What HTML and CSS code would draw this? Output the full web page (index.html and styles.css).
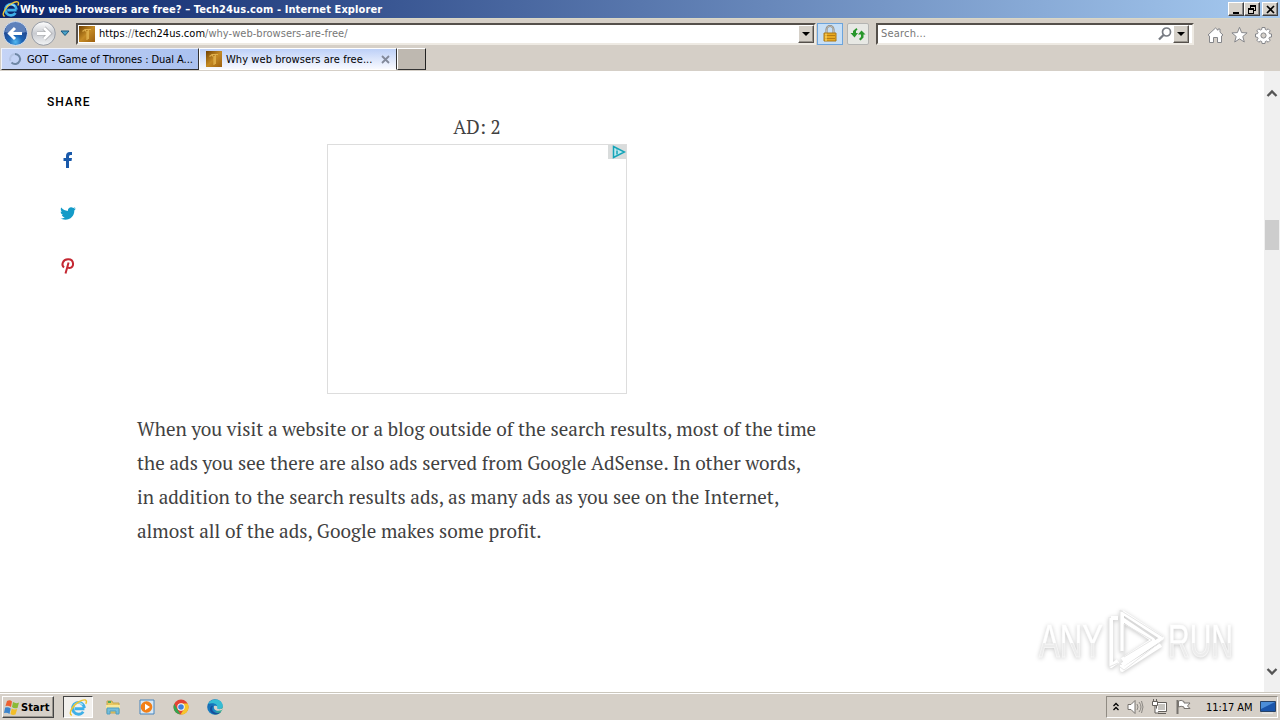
FILE: index.html
```html
<!DOCTYPE html>
<html lang="en">
<head>
<meta charset="utf-8">
<title>Why web browsers are free?</title>
<link rel="stylesheet" href="styles.css">
</head>
<body>
<svg class="defs" width="0" height="0" aria-hidden="true">
  <defs>
    <linearGradient id="gold" x2="1" y2="1"><stop stop-color="#704000"/><stop offset=".5" stop-color="#c48a25"/><stop offset="1" stop-color="#9d6010"/></linearGradient>
    <radialGradient id="orb" cy=".85"><stop stop-color="#55baf2"/><stop offset=".55" stop-color="#1c64b5"/><stop offset="1" stop-color="#224e98"/></radialGradient>
    <linearGradient id="glass" x2="0" y2="1"><stop stop-color="#fff"/><stop offset=".5" stop-color="#c9cbd0"/><stop offset="1" stop-color="#f2f4f6"/></linearGradient>
    <linearGradient id="edge" x2="1" y2="1"><stop stop-color="#185ba8"/><stop offset=".6" stop-color="#1687c8"/><stop offset="1" stop-color="#55ce65"/></linearGradient>
    <linearGradient id="markfill" x2="0" y2="1"><stop offset=".55" stop-color="#fff"/><stop offset=".55" stop-color="#ececec"/></linearGradient>
    <symbol id="ie" viewBox="0 0 18 18">
      <path d="M14.6 10.2H5.2M14.5 9.6A5.600 5.600 0 1 0 13.500 13" fill="none" stroke="#3fb0e8" stroke-width="2.700"/>
      <path d="M4.500 7.200A5.300 5.300 0 0 1 13 6.400" fill="none" stroke="#a5e2f8" stroke-width="1.200"/>
      <path d="M2.700 16.300C-1.200 15.500 3 7.100 9.600 3.500C14.500.7 18 1.300 15.900 5.500" fill="none" stroke="#edc431" stroke-width="1.400"/>
    </symbol>
    <symbol id="site" viewBox="0 0 16 16">
      <path d="M0 0h16v16H0z" fill="url(#gold)"/>
      <path d="M3.500 5.500 6 3.500h6M6.500 3.500v2M8 5v9M9.300 4v9" fill="none" stroke="#e0b04c" stroke-width="1.200"/>
    </symbol>
  </defs>
</svg>
<div class="screen">
  <header class="titlebar">
    <svg class="title-icon" width="18" height="18"><use href="#ie"/></svg>
    <span class="title">Why web browsers are free? – Tech24us.com - Internet Explorer</span>
    <div class="winbtns">
      <span class="winbtn"><svg width="13" height="11"><path d="M3 8h6v2H3z"/></svg></span>
      <span class="winbtn"><svg width="13" height="11"><path d="M4 1h6v6H8V6h1V3H5v1H4zM2 4h6v6H2zm1 2v3h4V6z" fill-rule="evenodd"/></svg></span>
      <span class="winbtn gap"><svg width="13" height="11"><path d="m3 2 7 7M10 2 3 9" stroke="#000" stroke-width="1.700"/></svg></span>
    </div>
  </header>
  <nav class="navbar">
    <svg class="back" width="28" height="28" viewBox="0 0 28 28"><circle cx="13.500" cy="13.500" r="12" fill="url(#orb)" stroke="#dce5f1"/><path d="M3 12A10.500 10.500 0 0 1 24 12Q14 15 3 12" fill="#8fabd8" opacity=".55"/><path d="M20 13.500H8.500M13 8l-5.500 5.500L13 19" fill="none" stroke="#fff" stroke-width="3"/></svg>
    <svg class="forward" width="28" height="28" viewBox="0 0 28 28"><circle cx="13.500" cy="13.500" r="11.800" fill="url(#glass)" stroke="#989da6"/><path d="M7 13.500h12M14 8l5.500 5.500L14 19" fill="none" stroke="#a8a9ac" stroke-width="4.200"/><path d="M7 13.500h12M14 8l5.500 5.500L14 19" fill="none" stroke="#fff" stroke-width="2.800"/></svg>
    <svg class="recent" width="10" height="7"><path d="M1 1h8L5 5.500z" fill="#4aa3c9" stroke="#17577e"/></svg>
    <div class="field address">
      <svg width="16" height="16"><use href="#site"/></svg>
      <span class="url">https<span class="grey">://</span>tech24us.com<span class="grey">/why-web-browsers-are-free/</span></span>
      <span class="drop"><svg width="8" height="4"><path d="M0 0h8L4 4z"/></svg></span>
    </div>
    <span class="tool lock"><svg width="16" height="18" viewBox="0 0 16 18"><path d="M4.500 8V4.500a3.500 3.500 0 0 1 7 0V8" fill="none" stroke="#85817a" stroke-width="2"/><path d="M4.500 8V4.500a3.500 3.500 0 0 1 7 0V8" fill="none" stroke="#d7d3c6" stroke-width=".7"/><path d="M2 8h12v8H2z" fill="#e8a920" stroke="#a97614"/><path d="M3 10.500h10M3 13.500h10" stroke="#b77d13"/><path d="M4 8.500V16" stroke="#ffe178"/></svg></span>
    <span class="tool refresh"><svg width="16" height="16" viewBox="0 0 16 16"><path d="M.5 7H3V5l3.500-3 1 1.500L6 5v2h2l-3.500 4.500zM8 8.500 11.500 4.500 15.500 8.500h-2v3L10.500 14.500 9 13l2-2V8.500z" fill="#27962b"/></svg></span>
    <div class="field search">
      <span class="search-label">Search...</span>
      <svg class="magnifier" width="16" height="16" viewBox="0 0 16 16"><circle cx="9.500" cy="6" r="4" fill="#fff" stroke="#777b82" stroke-width="1.700"/><path d="M6.500 9 2 13.500" stroke="#777b82" stroke-width="2.300"/></svg>
      <span class="drop"><svg width="8" height="4"><path d="M0 0h8L4 4z"/></svg></span>
    </div>
    <div class="commands">
      <svg width="17" height="18" viewBox="0 0 17 18"><path d="m1 9 7.500-7L11 4.300V3h2v3.200L16 9l-1.500 1V16.500h-4v-5h-4v5h-4V10z" fill="#fff" stroke="#85868a"/></svg>
      <svg width="17" height="18" viewBox="0 0 17 18"><path d="m8.500 1.300 2.100 5.300 5.500.3-4.300 3.600 1.500 5.500-4.800-3.100L3.700 16l1.500-5.500L.9 6.900l5.500-.3z" fill="#fff" stroke="#85868a"/></svg>
      <svg width="17" height="18" viewBox="0 0 17 18"><path d="m7 1.500h3l.3 2 1.200.5 1.700-1.200 2 2L14 6.500l.5 1.200 2 .3v3l-2 .3-.5 1.200 1.200 1.700-2 2-1.700-1.200-1.200.5-.3 2H7l-.3-2-1.200-.5-1.700 1.200-2-2L3 12.500l-.5-1.200-2-.3V8l2-.3L3 6.500 1.800 4.800l2-2L5.500 4l1.200-.5z" fill="#fff" stroke="#85868a"/><circle cx="8.500" cy="9.500" r="2.600" fill="#d5d0c9" stroke="#85868a"/></svg>
    </div>
  </nav>
  <div class="tabs">
    <div class="tab inactive">
      <svg width="14" height="14" viewBox="0 0 14 14"><path d="M7 2a5 5 0 1 1-3.500 8.500" fill="none" stroke="#6f87a5" stroke-width="2"/><path d="M7 2a5 5 0 0 0-4.500 7" fill="none" stroke="#b4c4e3" stroke-width="2"/></svg>
      <span class="tabtext">GOT - Game of Thrones : Dual A...</span>
    </div>
    <div class="tab active">
      <svg width="16" height="16"><use href="#site"/></svg>
      <span class="tabtext">Why web browsers are free...</span>
      <svg class="close" width="9" height="9"><path d="m1 1 7 7M8 1 1 8" stroke="#82899a" stroke-width="1.800"/></svg>
    </div>
    <div class="newtab"></div>
  </div>
  <main class="page">
    <aside class="share">
      <span class="share-label">SHARE</span>
      <svg class="facebook" width="16" height="18" viewBox="0 0 16 18"><path d="M6 17V10H3.500V7H6V5Q6 1 10 1h2v3h-1.500Q9 4 9 5.500V7h3l-.5 3H9v7z" fill="#1959aa"/></svg>
      <svg class="twitter" width="16" height="14" viewBox="0 0 16 14"><path d="M16 1.600l-1.700 1.800C14.500 10 8.500 15 0 11.600c2 .2 3.600-.4 4.800-1.300-1.600-.1-2.600-1-3-2.200h1.400C1.500 7.500.6 6.200.7 4.600l1.500.4C.7 3.800.4 2 1.200.6c1.900 2.100 4 3.200 6.700 3.400C7.400 1 10.900-1 13.300 1l2-.7-1.200 1.600z" fill="#149bc8"/></svg>
      <svg class="pinterest" width="16" height="18" viewBox="0 0 16 18"><path d="M4 10.500C1 8 2.500 2.500 8 2.300c6.500-.2 6.500 8.700 1.500 8.700-1.800 0-2.500-1.200-2.500-1.200M8.600 5.500 5.500 16.500" fill="none" stroke="#c42732" stroke-width="2"/></svg>
    </aside>
    <article class="article">
      <div class="adlabel">AD: 2</div>
      <div class="ad"><span class="adchoice"><svg width="18" height="14"><path d="M5.500 1.500v11L16.500 7z" fill="#bde9ef" stroke="#16a4b8" stroke-width="1.500"/><path d="M9 5.500v4M9 3.500v1" stroke="#16a4b8" stroke-width="1.500"/></svg></span></div>
      <p class="copy">
        <span class="line">When you visit a website or a blog outside of the search results, most of the time</span>
        <span class="line">the ads you see there are also ads served from Google AdSense. In other words,</span>
        <span class="line">in addition to the search results ads, as many ads as you see on the Internet,</span>
        <span class="line">almost all of the ads, Google makes some profit.</span>
      </p>
    </article>
    <div class="scrollbar">
      <svg class="up" width="12" height="9"><path d="m1.500 7 4.500-4.500L10.500 7" fill="none" stroke="#555" stroke-width="2.300"/></svg>
      <span class="thumb"></span>
      <svg class="down" width="12" height="9"><path d="m1.500 2 4.500 4.500L10.500 2" fill="none" stroke="#555" stroke-width="2.300"/></svg>
    </div>
    <svg class="watermark" width="224" height="72" viewBox="0 0 224 72">
      <text class="mark" x="4" y="50" textLength="64" lengthAdjust="spacingAndGlyphs">ANY</text>
      <g transform="translate(72 2)"><path d="M15 3v39M15 3 55 29 15 56M15 10l31 21-31 20M4 9v48l7-5M11 9H4M15 56v5l39-25" fill="none" stroke="#fff" stroke-width="4" stroke-linejoin="round"/><path d="M13 1v43M13 1l43 27M56 31 17 61l-4-3M2 8v50l9-4M17 15v33l28-17z" fill="none" stroke="#e6e6e6"/></g>
      <text class="mark" x="133" y="50" textLength="65" lengthAdjust="spacingAndGlyphs">RUN</text>
    </svg>
  </main>
  <footer class="taskbar">
    <div class="start"><svg width="17" height="17" viewBox="0 0 17 17"><path d="M3 2q3-1.500 5 .5L7 8Q4 6 1.500 7z" fill="#ed6030"/><path d="M9 3q3 2 6 .5L13.500 9Q10 10 8 8z" fill="#8aba35"/><path d="M1.200 8.500q3-1 5.500 1L5.500 15Q3 13 0 14z" fill="#3c84cc"/><path d="M7.700 9.500q2.500 1.500 5.500.5L11.500 15.500q-3 1-5-.5z" fill="#f3be28"/></svg><b>Start</b></div>
    <div class="task ie-task"><svg width="19" height="19"><use href="#ie"/></svg></div>
    <div class="quick">
      <svg width="18" height="18" viewBox="0 0 18 18"><path d="M3 3h5l1 2h6v10H3z" fill="#e9c860" stroke="#c4a651"/><path d="M2 7h14v4H2z" fill="#f8e89b"/><path d="M3 10h12v6h-3v-3H6v3H3z" fill="#75bddb" stroke="#4e9fc3"/><path d="M4 4h3" stroke="#55a856" stroke-width="2"/></svg>
      <svg width="18" height="18" viewBox="0 0 18 18"><path d="M2 2h14v14H2z" fill="#d8e8f5" stroke="#4684bd"/><circle cx="8.500" cy="9" r="5.800" fill="#f27f18"/><path d="m7 5.800 5 3.200-5 3.200z" fill="#fff"/></svg>
      <svg width="18" height="18" viewBox="0 0 18 18"><circle cx="9" cy="9" r="7.500" fill="#e34334"/><path d="M2.300 5.700 6 12.500 8.500 16.500A7.500 7.500 0 0 1 2.300 5.700" fill="#31a650"/><path d="M9 5.500h6.700A7.500 7.500 0 0 1 8.500 16.500L12 11z" fill="#f6c62c"/><circle cx="9" cy="9" r="3.700" fill="#fff"/><circle cx="9" cy="9" r="2.800" fill="#4081dc"/></svg>
      <svg width="18" height="18" viewBox="0 0 18 18"><circle cx="9" cy="9" r="7.800" fill="url(#edge)"/><path d="M2 6C5 0 15 0 16.700 7c.5 4-5 5-6 3 2-3-2-6-8.700-4" fill="#35bcd4"/><path d="M7 8c-3 4 2 9 8 6-3 4-10 3-11-2-.5-3 2-5 3-4" fill="#174f9e"/><path d="M8 8c-1 4 3 6 8 4l1-2c-3 2-6 1-6 0 1-1 0-3-3-2" fill="#d6d2cb"/></svg>
    </div>
    <div class="tray">
      <svg class="chev" width="8" height="10"><path d="m1.500 4 2.500-2.500L6.500 4M1.500 8 4 5.500 6.500 8" fill="none" stroke="#000" stroke-width="1.300"/></svg>
      <svg width="17" height="16" viewBox="0 0 17 16"><path d="M1 5.500h3l4-4v13l-4-4H1z" fill="#fff" stroke="#77736e"/><path d="M10 5q2 3 0 6M12 3q4 5 0 10M14.500 2q3 6 0 12" fill="none" stroke="#8a8782"/></svg>
      <svg width="17" height="16" viewBox="0 0 17 16"><path d="M5.500 3.500h10v9h-10z" fill="#fff" stroke="#625f5b"/><path d="M7 5h7v6H7z" fill="#c6c4bf"/><path d="M7 14.500h8" stroke="#625f5b"/><path d="M1.500 2.500h5v4h-5zM2.500 0v2M5.500 0v2M4 7v7h4" fill="#fff" stroke="#625f5b"/></svg>
      <svg width="17" height="16" viewBox="0 0 17 16"><path d="M2.500 1v14" stroke="#77736e" stroke-width="2"/><path d="M3.500 2Q6 .5 9 2.500V4h6l-2.500 3L15 9.500H9V8Q6 6.500 3.500 8z" fill="#fff" stroke="#77736e"/></svg>
      <span class="clock">11:17 AM</span>
      <svg class="desktop" width="16" height="13" viewBox="0 0 16 13"><path d="M.5.5h15v10H.5z" fill="#1a55aa" stroke="#284366"/><path d="M1 1h14L1 8z" fill="#4c8ed8"/><path d="M2 12h11" stroke="#eceff3"/></svg>
    </div>
  </footer>
</div>
</body>
</html>
```
FILE: styles.css
```css
* { box-sizing: border-box; }
body { margin: 0; overflow: hidden; background: #fff; }
svg { display: block; flex: none; }
.defs { position: absolute; }
.screen { width: 1280px; height: 720px; display: grid; grid-template-rows: 18px 30px 23px 621px 28px; font: 11px "DejaVu Sans Condensed", sans-serif; color: #000; white-space: nowrap; }
.titlebar { display: flex; align-items: center; padding: 0 2px; background: linear-gradient(90deg, #0a246a, #a6caf0); color: #fff; }
.title { font-weight: bold; letter-spacing: .1px; }
.winbtns { display: flex; margin-left: auto; }
.winbtn { width: 16px; height: 14px; padding: 1px; background: #d6d2cb; border: 1px solid; border-color: #fff #404040 #404040 #fff; box-shadow: inset -1px -1px #888; }
.winbtn.gap { margin-left: 2px; }
.navbar { display: flex; align-items: center; padding-left: 2px; background: #d5cfc7; border-top: 1px solid #d9d7c5; }
.recent { margin-left: 2px; }
.field { display: flex; align-items: center; height: 22px; background: #fff; border: 2px solid; border-color: #55504b #eeeae3 #eeeae3 #55504b; }
.address { width: 740px; margin-left: 6px; padding-left: 1px; }
.url { margin-left: 4px; letter-spacing: .03px; }
.grey { color: #777; }
.drop { display: flex; align-items: center; justify-content: center; width: 16px; height: 18px; margin-left: auto; background: #d5d0c8; border: 1px solid; border-color: #fff #55504b #55504b #fff; box-shadow: inset -1px -1px #99958e; }
.tool { display: flex; align-items: center; justify-content: center; height: 22px; }
.lock { width: 26px; margin-left: 1px; background: #c7dff6; border: 1px solid #6ca4dc; }
.refresh { width: 22px; margin-left: 4px; background: #e7e8e4; border: 1px solid #b4b4b2; border-radius: 2px; }
.search { width: 318px; margin-left: 7px; padding: 0 3px; }
.search-label { color: #777; letter-spacing: .2px; }
.magnifier { margin-left: auto; }
.search .drop { margin-left: 0; }
.commands { display: flex; gap: 7px; margin: 2px 0 0 13px; }
.tabs { display: flex; align-items: stretch; background: #d5cfc7; padding-bottom: 1px; }
.tab { display: flex; align-items: center; height: 22px; }
.inactive { width: 198px; margin-left: 1px; padding-left: 6px; background: linear-gradient(90deg, #c5d4f6, #aac1ef); border: 1px solid; border-color: #edf1fb #333 #333 #f1f4fa; }
.inactive .tabtext { margin-left: 5px; letter-spacing: -.06px; }
.active { width: 198px; padding-left: 6px; background: linear-gradient(#bdd0f7, #f9faff); border: 1px solid; border-color: #fff #333 #fff #fff; }
.active .tabtext { margin-left: 4px; letter-spacing: .07px; }
.close { margin-left: auto; margin-right: 6px; }
.newtab { width: 29px; height: 22px; background: #beb8b0; border: 1px solid; border-color: #fff #222 #333 #fff; }
.page { position: relative; display: flex; background: #fff; }
.share { width: 137px; padding: 24px 0 0 47px; }
.share-label { display: block; height: 14px; font: 500 12px/14px Roboto, sans-serif; letter-spacing: 1.1px; }
.facebook { margin: 42px 0 0 13px; }
.twitter { margin: 38px 0 0 13px; }
.pinterest { margin: 36px 0 0 13px; }
.article { width: 680px; padding-top: 39px; font: 19px/34px "PT Serif", "Liberation Serif", serif; color: #414141; }
.adlabel { height: 34px; text-align: center; }
.ad { display: flex; justify-content: flex-end; width: 300px; height: 250px; margin: 0 auto; border: 1px solid #ddd; }
.adchoice { width: 18px; height: 14px; background: #d9dcdc; }
.copy { margin: 18px 0 0; }
.line { display: block; width: max-content; letter-spacing: .02px; }
.scrollbar { display: flex; flex-direction: column; width: 16px; margin-left: auto; padding: 18px 1px 16px; background: #f0f0f0; }
.up, .down { align-self: center; }
.thumb { width: 14px; height: 30px; margin-top: 122px; background: #cdcdcd; }
.down { margin-top: auto; }
.watermark { position: absolute; left: 1035px; top: 536px; overflow: visible; filter: drop-shadow(0 1px 2px #c4c4c4); }
.mark { font: 47px "Liberation Sans", sans-serif; fill: url(#markfill); stroke: #fff; stroke-opacity: .6; }
.taskbar { display: flex; align-items: center; padding: 1px 2px 0; border-top: 1px solid #cbc7bd; box-shadow: inset 0 1px #fff; background: #d6d0c8; }
.start { display: flex; align-items: center; width: 52px; height: 22px; padding-left: 1px; border: 1px solid; border-color: #fff #444 #444 #fff; box-shadow: inset -1px -1px #99958e; }
.start b { letter-spacing: .1px; }
.task { display: flex; align-items: center; justify-content: center; width: 30px; height: 22px; margin-left: 9px; background: #f2f0ed; border: 1px solid; border-color: #444 #fff #fff #444; }
.quick { display: flex; gap: 16px; margin-left: 11px; }
.tray { display: flex; align-items: center; width: 172px; height: 22px; margin-left: auto; padding: 0 1px 0 5px; border: 1px solid; border-color: #908b83 #fff #fff #908b83; }
.tray svg + svg { margin-left: 7px; }
.clock { margin-left: 14px; letter-spacing: -.05px; }
.tray .desktop { margin-left: auto; }
```
